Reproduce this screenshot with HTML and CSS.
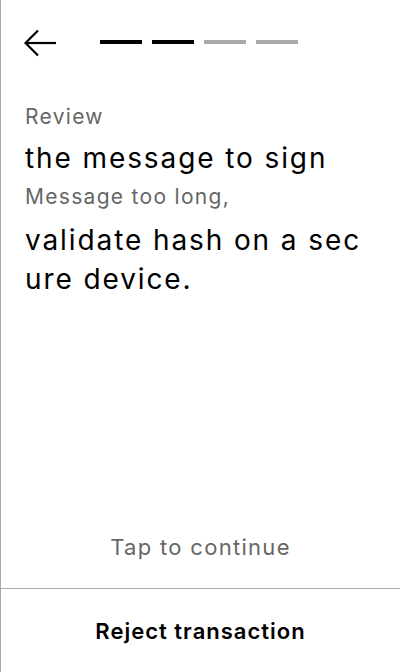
FILE: index.html
```html
<!DOCTYPE html>
<html>
<head>
<meta charset="utf-8">
<link rel="stylesheet" href="styles.css">
</head>
<body>
<div class="screen">
  <div class="topbar">
    <svg class="back" width="32" height="28" viewBox="0 0 32 28" fill="none" stroke="#000" stroke-width="2.2">
      <path d="M32 14H2"/>
      <path d="M14 1.5L1.5 14L14 26.5"/>
    </svg>
    <div class="steps">
      <span class="step done"></span>
      <span class="step done"></span>
      <span class="step"></span>
      <span class="step"></span>
    </div>
  </div>
  <div class="content">
    <div class="label">Review</div>
    <div class="value">the message to sign</div>
    <div class="label second">Message too long,</div>
    <div class="value wrap">validate hash on a secure device.</div>
  </div>
  <div class="tap">Tap to continue</div>
  <div class="footer">Reject transaction</div>
</div>
</body>
</html>
```
FILE: styles.css
```css
html, body {
  margin: 0;
  padding: 0;
  background: #fff;
}
.screen {
  width: 400px;
  height: 672px;
  box-sizing: border-box;
  border-left: 1px solid #aaa;
  display: flex;
  flex-direction: column;
  font-family: Inter, "Noto Sans", sans-serif;
  color: #000;
}
.topbar {
  display: flex;
  align-items: center;
  height: 28px;
  padding: 29px 0 0 23px;
}
.back {
  display: block;
}
.steps {
  display: flex;
  gap: 10px;
  margin-left: 44px;
  margin-top: -2px;
}
.step {
  width: 42px;
  height: 4px;
  background: #aaa;
}
.step.done {
  background: #000;
}
.content {
  padding: 46px 24px 0 24px;
}
.label {
  font-size: 21px;
  line-height: 28px;
  letter-spacing: 1.3px;
  color: #666;
}
.value {
  font-size: 28px;
  line-height: 36px;
  letter-spacing: 1.9px;
  margin-top: 9px;
}
.label.second {
  margin-top: 7px;
}
.value.wrap {
  word-break: break-all;
  margin-top: 10px;
  line-height: 39px;
}
.tap {
  margin-top: auto;
  text-align: center;
  font-size: 22px;
  letter-spacing: 1.3px;
  color: #666;
  padding-bottom: 28px;
}
.footer {
  border-top: 1px solid #aaa;
  height: 83px;
  display: flex;
  align-items: center;
  justify-content: center;
  font-size: 22px;
  letter-spacing: 1px;
  font-weight: 600;
}
```
